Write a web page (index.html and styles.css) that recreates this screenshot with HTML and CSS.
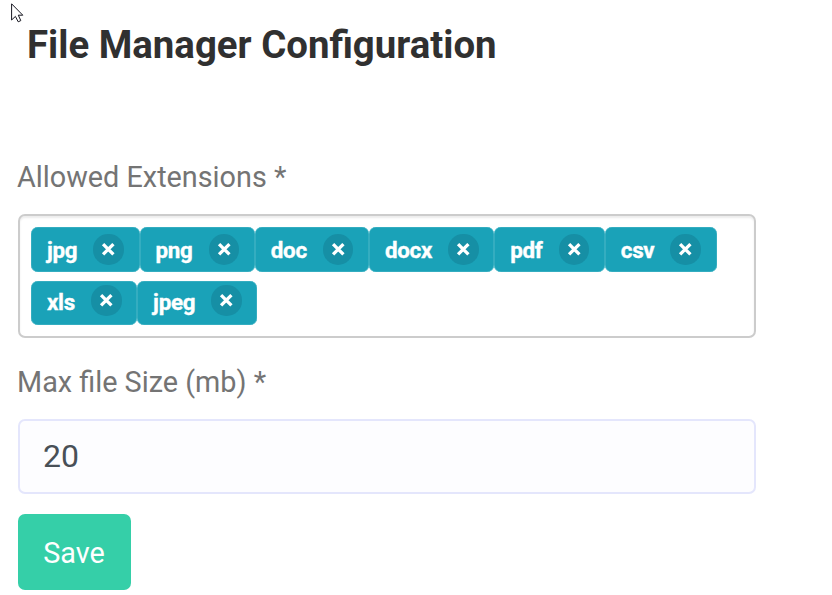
FILE: index.html
```html
<!DOCTYPE html>
<html lang="en">
<head>
<meta charset="utf-8">
<title>File Manager Configuration</title>
<link rel="stylesheet" href="styles.css">
</head>
<body>
<svg class="cursor" width="13" height="20" viewBox="0 0 13 20"><path d="M.6 .8V17L4.4 13.4L7.2 18.8L9.8 17.6L7.3 12.2H11.8Z"/></svg>
<main class="page">
<h1 class="title">File Manager Configuration</h1>
<form class="form">
<label class="label">Allowed Extensions *</label>
<div class="tags">
<div class="row">
<span class="tag">jpg<b class="remove"><svg viewBox="0 0 14 14"><path d="M2 2L12 12M12 2L2 12"/></svg></b></span>
<span class="tag">png<b class="remove"><svg viewBox="0 0 14 14"><path d="M2 2L12 12M12 2L2 12"/></svg></b></span>
<span class="tag">doc<b class="remove"><svg viewBox="0 0 14 14"><path d="M2 2L12 12M12 2L2 12"/></svg></b></span>
<span class="tag">docx<b class="remove"><svg viewBox="0 0 14 14"><path d="M2 2L12 12M12 2L2 12"/></svg></b></span>
<span class="tag">pdf<b class="remove"><svg viewBox="0 0 14 14"><path d="M2 2L12 12M12 2L2 12"/></svg></b></span>
<span class="tag">csv<b class="remove"><svg viewBox="0 0 14 14"><path d="M2 2L12 12M12 2L2 12"/></svg></b></span>
</div>
<div class="row row-last">
<span class="tag">xls<b class="remove"><svg viewBox="0 0 14 14"><path d="M2 2L12 12M12 2L2 12"/></svg></b></span>
<span class="tag">jpeg<b class="remove"><svg viewBox="0 0 14 14"><path d="M2 2L12 12M12 2L2 12"/></svg></b></span>
</div>
</div>
<label class="label label-size" for="size">Max file Size (mb) *</label>
<input class="input" id="size" type="text" value="20">
<button class="save" type="button">Save</button>
</form>
</main>
</body>
</html>
```

FILE: styles.css
```css
* { box-sizing: border-box; }
body { margin: 0; background: #fff; font-family: Roboto, sans-serif; overflow: hidden; }
.cursor { position: absolute; left: 11px; top: 3px; fill: #fff; stroke: #15151f; stroke-width: 1; }
.page { padding: 22px 76px 0 18px; }
.title { margin: 0 0 0 9px; font-size: 38.4px; line-height: 46px; font-weight: 700; color: #303030; white-space: nowrap; }
.form { display: flex; flex-direction: column; align-items: flex-start; padding-top: 91px; }
.label { margin-left: -1px; font-size: 28.8px; line-height: 36px; color: #747474; }
.tags { width: 738px; height: 124px; margin-top: 19px; padding: 11px; border: 2px solid #ccc; border-radius: 7px; box-shadow: inset 0 2px 2px rgba(0, 0, 0, .075); }
.row { display: flex; }
.row-last { margin-top: 9px; }
.tag { display: flex; align-items: center; height: 44.5px; padding: 1px 15.6px 0 16px; border-radius: 7px; background: #1aa2b8; box-shadow: inset 0 0 0 .5px #4eb8c8; color: #fff; font-size: 22.4px; font-weight: 700; letter-spacing: -.3px; -webkit-text-stroke: .35px #fff; }
.remove { display: flex; align-items: center; justify-content: center; width: 30.6px; height: 31px; margin: -1px 0 0 16px; border-radius: 15px; background: #168fa5; }
.row-last .remove { margin-top: -3px; }
.row-last .tag { padding-top: 0; padding-bottom: 1.5px; }
.remove svg { width: 14.5px; height: 14.5px; fill: none; stroke: #fff; stroke-width: 3.2; }
.label-size { margin-top: 26px; }
.input { width: 738px; height: 75px; margin-top: 19px; padding: 0 24px 2px 23px; border: 2px solid #e4e6fc; border-radius: 7px; background: #fdfdff; color: #495057; font: 32px Roboto, sans-serif; }
.save { width: 113px; height: 75.5px; margin-top: 20px; padding: 2px 1px 0 0; border: 0; border-radius: 7px; background: #35cfa8; color: #fff; font: 28.8px Roboto, sans-serif; }
```
